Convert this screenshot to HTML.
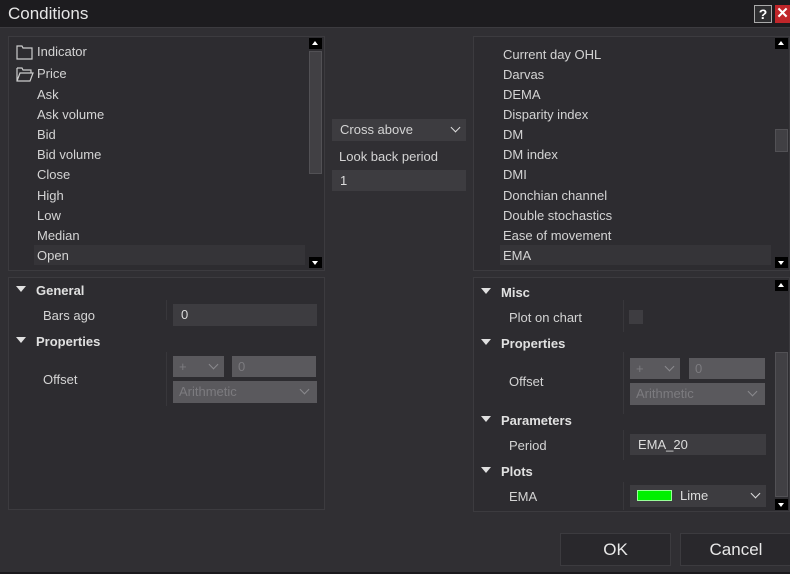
<!DOCTYPE html><html><head><style>
*{margin:0;padding:0;box-sizing:border-box}
body{width:790px;height:574px;background:#302f33;font-family:"Liberation Sans",Arial,sans-serif;font-size:13px;color:#d4d4d4;position:relative;overflow:hidden}
.a{position:absolute}
.tb{left:0;top:0;width:790px;height:28px;background:#1d1c1f;border-bottom:1px solid #3c3b3f}
.panel{border:1px solid #3c3b3f;background:#2d2c30}
.t{position:absolute;white-space:nowrap}
.arr{position:absolute;width:13px;height:11px;background:#000}
.arr:after{content:"";position:absolute;left:3px;border-left:3.5px solid transparent;border-right:3.5px solid transparent}
.up:after{top:3px;border-bottom:4px solid #fff}
.dn:after{top:4px;border-top:4px solid #fff}
.thumb{position:absolute;background:#414044;border:1px solid #525155}
.in{position:absolute;background:#3d3c40;color:#dcdcdc;padding-left:8px}
.dis{position:absolute;background:#5a595d;color:#7c7b7f;padding-left:6px}
.b{font-weight:bold;color:#e0e0e0}
.tri{position:absolute;width:0;height:0;border-left:5px solid transparent;border-right:5px solid transparent;border-top:6px solid #e0e0e0}
.chev{position:absolute;width:7px;height:7px;border-right:1.5px solid currentColor;border-bottom:1.5px solid currentColor;transform:rotate(45deg)}
.btn{position:absolute;background:#29282c;border:1px solid #3c3b3f;font-size:17px;color:#e8e8e8;text-align:center;line-height:31px}
.vl{position:absolute;width:1px;background:#38373b}
</style></head><body>
<div class="a tb"></div>
<div class="t" style="left:8px;top:4px;font-size:17px;color:#e6e6e6">Conditions</div>
<div class="a" style="left:754px;top:5px;width:18px;height:18px;background:#2e2e30;border:1px solid #aaa;color:#fff;font-weight:bold;font-size:14px;text-align:center;line-height:16px">?</div>
<div class="a" style="left:775px;top:5px;width:15px;height:18px;background:#c0262a;color:#fff;font-weight:bold;font-size:15px;text-align:center;line-height:18px">✕</div>

<div class="a panel" style="left:8px;top:36px;width:317px;height:235px"></div>
<svg class="a" style="left:16px;top:44px" width="18" height="40"><path d="M1 2h5l1 2h9v11H1z" fill="none" stroke="#ccc" stroke-width="1.2"/><path d="M1 24h5l1 2h8v3M1 24v13h13l3-8H4l-3 8" fill="none" stroke="#ccc" stroke-width="1.2"/></svg>
<div class="t" style="left:37px;top:44px">Indicator</div>
<div class="t" style="left:37px;top:66px">Price</div>
<div class="a" style="left:34px;top:245px;width:271px;height:20px;background:#353438"></div>
<div class="t" style="left:37px;top:87px">Ask</div>
<div class="t" style="left:37px;top:107px">Ask volume</div>
<div class="t" style="left:37px;top:127px">Bid</div>
<div class="t" style="left:37px;top:147px">Bid volume</div>
<div class="t" style="left:37px;top:167px">Close</div>
<div class="t" style="left:37px;top:188px">High</div>
<div class="t" style="left:37px;top:208px">Low</div>
<div class="t" style="left:37px;top:228px">Median</div>
<div class="t" style="left:37px;top:248px">Open</div>
<div class="thumb" style="left:309px;top:51px;width:13px;height:123px"></div>
<div class="arr up" style="left:309px;top:38px"></div>
<div class="arr dn" style="left:309px;top:257px"></div>

<div class="in" style="left:332px;top:119px;width:134px;height:22px;line-height:22px;color:#d4d4d4">Cross above<span class="chev" style="left:120px;top:5px;color:#ddd"></span></div>
<div class="t" style="left:339px;top:149px">Look back period</div>
<div class="in" style="left:332px;top:170px;width:134px;height:21px;line-height:21px">1</div>

<div class="a panel" style="left:473px;top:36px;width:317px;height:235px"></div>
<div class="t" style="left:503px;top:47px">Current day OHL</div>
<div class="t" style="left:503px;top:67px">Darvas</div>
<div class="t" style="left:503px;top:87px">DEMA</div>
<div class="t" style="left:503px;top:107px">Disparity index</div>
<div class="t" style="left:503px;top:127px">DM</div>
<div class="t" style="left:503px;top:147px">DM index</div>
<div class="t" style="left:503px;top:167px">DMI</div>
<div class="t" style="left:503px;top:188px">Donchian channel</div>
<div class="t" style="left:503px;top:208px">Double stochastics</div>
<div class="t" style="left:503px;top:228px">Ease of movement</div>
<div class="a" style="left:500px;top:245px;width:271px;height:20px;background:#353438"></div>
<div class="t" style="left:503px;top:248px">EMA</div>
<div class="thumb" style="left:775px;top:129px;width:13px;height:23px"></div>
<div class="arr up" style="left:775px;top:38px"></div>
<div class="arr dn" style="left:775px;top:257px"></div>

<div class="a panel" style="left:8px;top:277px;width:317px;height:233px"></div>
<div class="vl" style="left:166px;top:300px;height:20px"></div>
<div class="vl" style="left:166px;top:352px;height:54px"></div>
<div class="tri" style="left:16px;top:286px"></div>
<div class="t b" style="left:36px;top:283px">General</div>
<div class="t" style="left:43px;top:308px">Bars ago</div>
<div class="in" style="left:173px;top:304px;width:144px;height:22px;line-height:22px">0</div>
<div class="tri" style="left:16px;top:337px"></div>
<div class="t b" style="left:36px;top:334px">Properties</div>
<div class="t" style="left:43px;top:372px">Offset</div>
<div class="dis" style="left:173px;top:356px;width:51px;height:21px;line-height:21px">+<span class="chev" style="left:37px;top:5px;color:#8a898d"></span></div>
<div class="dis" style="left:232px;top:356px;width:84px;height:21px;line-height:21px">0</div>
<div class="dis" style="left:173px;top:381px;width:144px;height:22px;line-height:22px">Arithmetic<span class="chev" style="left:128px;top:5px;color:#8a898d"></span></div>

<div class="a panel" style="left:473px;top:277px;width:317px;height:235px"></div>
<div class="vl" style="left:623px;top:300px;height:32px"></div>
<div class="vl" style="left:623px;top:352px;height:62px"></div>
<div class="vl" style="left:623px;top:430px;height:30px"></div>
<div class="vl" style="left:623px;top:482px;height:28px"></div>
<div class="tri" style="left:481px;top:288px"></div>
<div class="t b" style="left:501px;top:285px">Misc</div>
<div class="t" style="left:509px;top:310px">Plot on chart</div>
<div class="a" style="left:629px;top:310px;width:14px;height:14px;background:#3e3d41"></div>
<div class="tri" style="left:481px;top:339px"></div>
<div class="t b" style="left:501px;top:336px">Properties</div>
<div class="t" style="left:509px;top:374px">Offset</div>
<div class="dis" style="left:630px;top:358px;width:50px;height:21px;line-height:21px">+<span class="chev" style="left:36px;top:5px;color:#8a898d"></span></div>
<div class="dis" style="left:689px;top:358px;width:76px;height:21px;line-height:21px">0</div>
<div class="dis" style="left:630px;top:383px;width:135px;height:22px;line-height:22px">Arithmetic<span class="chev" style="left:119px;top:5px;color:#8a898d"></span></div>
<div class="tri" style="left:481px;top:416px"></div>
<div class="t b" style="left:501px;top:413px">Parameters</div>
<div class="t" style="left:509px;top:438px">Period</div>
<div class="in" style="left:630px;top:434px;width:136px;height:21px;line-height:21px">EMA_20</div>
<div class="tri" style="left:481px;top:467px"></div>
<div class="t b" style="left:501px;top:464px">Plots</div>
<div class="t" style="left:509px;top:489px">EMA</div>
<div class="in" style="left:630px;top:485px;width:136px;height:22px;line-height:22px"><span class="a" style="left:7px;top:5px;width:35px;height:11px;background:#00f000;border:1px solid #9f9"></span><span class="a" style="left:50px;top:0">Lime</span><span class="chev" style="left:122px;top:5px;color:#ddd"></span></div>
<div class="thumb" style="left:775px;top:352px;width:13px;height:145px"></div>
<div class="arr up" style="left:775px;top:280px"></div>
<div class="arr dn" style="left:775px;top:499px"></div>

<div class="btn" style="left:560px;top:533px;width:111px;height:33px">OK</div>
<div class="btn" style="left:680px;top:533px;width:112px;height:33px">Cancel</div>
<div class="a" style="left:0;top:572px;width:790px;height:2px;background:#1a191c"></div>
</body></html>
